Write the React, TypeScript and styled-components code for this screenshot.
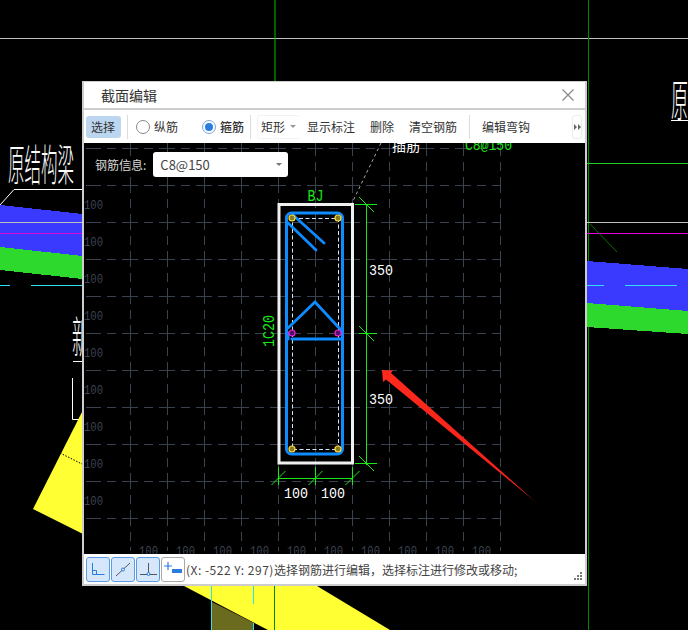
import { createGlobalStyle } from "styled-components";
import styled from "styled-components";

const GlobalStyle = createGlobalStyle`
  html, body { margin: 0; padding: 0; background: #000; }
  body { font-family: "Noto Sans CJK SC", "Noto Sans", sans-serif; }
`;

const Stage = styled.div`
  position: relative;
  width: 688px;
  height: 630px;
  overflow: hidden;
  background: #000;
`;

const Backdrop = styled.svg`
  display: block;
`;

const Dialog = styled.div`
  position: absolute;
  left: 82px;
  top: 81px;
  width: 505px;
  height: 505px;
  box-sizing: border-box;
  border: 2px solid #cdcdcd;
  border-top-width: 1px;
  background: #cdcdcd;
  display: flex;
  flex-direction: column;
`;

const TitleBar = styled.div`
  height: 26px;
  flex: none;
  background: #fff;
  display: flex;
  align-items: center;
  justify-content: space-between;
  padding: 0 11px 0 17px;
  margin-bottom: 2px;
  font-size: 14px;
  color: #333;
`;

const Toolbar = styled.div`
  height: 33px;
  flex: none;
  box-sizing: border-box;
  background: #fff;
  display: flex;
  align-items: center;
  padding-left: 2px;
  font-size: 12px;
  color: #333;
`;

const ToolButton = styled.span<{ $left?: number; $active?: boolean }>`
  margin-left: ${(p) => p.$left ?? 0}px;
  padding: 0 ${(p) => (p.$active ? 6 : 5)}px 0 5px;
  height: 22px;
  line-height: 22px;
  border-radius: 3px;
  background: ${(p) => (p.$active ? "#bcd6f0" : "transparent")};
  white-space: nowrap;
`;

const Separator = styled.span<{ $left: number }>`
  width: 1px;
  height: 24px;
  margin-left: ${(p) => p.$left}px;
  background: #dcdcdc;
`;

const Radio = styled.span<{ $left: number; $checked?: boolean }>`
  width: 14px;
  height: 14px;
  flex: none;
  box-sizing: border-box;
  margin-left: ${(p) => p.$left}px;
  margin-right: 4px;
  border-radius: 50%;
  border: 1px solid ${(p) => (p.$checked ? "#7aa7d8" : "#8a8a8a")};
  display: flex;
  align-items: center;
  justify-content: center;
  &::after {
    content: "";
    width: 8px;
    height: 8px;
    border-radius: 50%;
    background: ${(p) => (p.$checked ? "#2b7de0" : "transparent")};
  }
`;

const RadioLabel = styled.span<{ $strong?: boolean }>`
  font-weight: ${(p) => (p.$strong ? 500 : 400)};
  white-space: nowrap;
`;

const Caret = styled.span<{ $color: string }>`
  width: 0;
  height: 0;
  border-left: 3px solid transparent;
  border-right: 3px solid transparent;
  border-top: 3px solid ${(p) => p.$color};
`;

const ShapeMenu = styled.span`
  margin-left: 6px;
  height: 22px;
  padding: 0 4px 0 3px;
  display: flex;
  align-items: center;
  gap: 5px;
  border: 1px solid #f3f3f3;
  border-right: none;
  border-radius: 3px;
`;

const Overflow = styled.span`
  margin-left: auto;
  margin-right: 3px;
  width: 10px;
  height: 24px;
  box-sizing: border-box;
  border: 1px solid #ececec;
  border-radius: 3px;
  display: flex;
  align-items: center;
  justify-content: center;
`;

const Canvas = styled.div`
  position: relative;
  flex: 1;
  min-height: 0;
  background: #000;
  overflow: hidden;
`;

const CanvasDrawing = styled.svg`
  display: block;
`;

const InfoRow = styled.div`
  position: absolute;
  left: 11px;
  top: 9px;
  display: flex;
  align-items: center;
  gap: 7px;
  font-size: 12px;
  color: #d8d8d8;
`;

const SelectBox = styled.div`
  width: 135px;
  height: 25px;
  box-sizing: border-box;
  padding: 0 6px 0 7px;
  background: #fff;
  border-radius: 3px;
  display: flex;
  align-items: center;
  justify-content: space-between;
  font-size: 13px;
  color: #444;
`;

const StatusBar = styled.div`
  position: relative;
  height: 30px;
  flex: none;
  background: #fff;
  display: flex;
  align-items: center;
  padding-left: 2px;
  font-size: 12px;
  color: #444;
`;

const SnapGroup = styled.div`
  display: flex;
  gap: 1px;
  margin-right: 1px;
`;

const SnapButton = styled.span<{ $on?: boolean }>`
  width: 24px;
  height: 25px;
  box-sizing: border-box;
  border: 1px solid ${(p) => (p.$on ? "#5b9be6" : "#a8a8a8")};
  border-radius: 3px;
  background: ${(p) => (p.$on ? "#d6e6fb" : "#fff")};
  display: flex;
  align-items: center;
  justify-content: center;
`;

const StatusText = styled.span`
  white-space: nowrap;
`;

const Coords = styled.span`
  letter-spacing: 0.5px;
`;

const Grip = styled.svg`
  position: absolute;
  right: 2px;
  bottom: 3px;
`;

const gridXs = Array.from({ length: 11 }, (_, i) => 130 + i * 37);
const gridYs = Array.from({ length: 11 }, (_, i) => 148 + i * 37);
const leftLabelYs = [204, 241, 278, 315, 352, 389, 426, 463, 500];
const GREEN = "#18e818";
const BLUE = "#0d8bff";
const cadFont = '"Liberation Mono", monospace';

const DimSlash = ({ x, y }: { x: number; y: number }) => (
  <path d={`M${x - 7.5} ${y - 7.5}L${x + 7.5} ${y + 7.5}`} stroke={GREEN} fill="none" />
);

const BackdropArt = () => (
  <Backdrop width="688" height="630" viewBox="0 0 688 630">
    <defs>
      <clipPath id="edgeClip">
        <rect x="0" y="0" width="82" height="630" />
      </clipPath>
    </defs>
    <path d="M0 38.5H688" stroke="#c0c0c0" />
    <path d="M275 0V82" stroke="#00c000" />
    <path d="M588.5 0V630" stroke="#008a00" />

    <g shapeRendering="crispEdges">
      <polygon points="0,205 83,214 83,256 0,247" fill="#3a3aff" />
      <polygon points="0,247 83,256 83,279 0,270" fill="#2ed92e" />
      <polygon points="587,261 688,269 688,311 587,303" fill="#3a3aff" />
      <polygon points="587,303 688,311 688,334 587,327" fill="#2ed92e" />
    </g>
    <path d="M0 222.5H83M587 222.5H688" stroke="#c0c0c0" />
    <path d="M0 233.5H83M587 233.5H688" stroke="#e000e0" />
    <path d="M0 285.5H10M31 285.5H83M587 285.5H604M625 285.5H677" stroke="#30e0f0" />
    <path d="M587 163.5H688" stroke="#22cc22" />
    <path d="M590 224L617 252" stroke="#007000" />

    <path d="M0 205L14 189.5H83" stroke="#fff" fill="none" />
    <text x="8" y="69.6" fontSize="16.5" fill="#fff" transform="scale(1 2.6)" fontWeight="300">
      原结构梁
    </text>
    <text x="671" y="45" fontSize="17" fill="#fff" transform="scale(1 2.6)" fontWeight="300">
      原
    </text>
    <path d="M671 120.5H688" stroke="#fff" />
    <g clipPath="url(#edgeClip)">
      <text x="72" y="136" fontSize="17" fill="#fff" transform="scale(1 2.6)" fontWeight="300">
        新
      </text>
    </g>
    <path d="M73 361.5H83M72.5 378V419.5H83" stroke="#fff" fill="none" />

    <polygon points="83,410 33,509 83,534" fill="#ffff33" />
    <path d="M60 453L83 464.5" stroke="#000" strokeDasharray="1.5 1.5" />

    <polygon points="184,586 317,586 390,630 268,630" fill="#ffff33" />
    <polygon points="212,602 254,623 254,630 212,630" fill="#6b6b1f" />
    <path d="M211.5 586V630M253.5 586V604M253.5 623V630" stroke="#30e0f0" />
    <path d="M274.5 586V630" stroke="#008a00" />
  </Backdrop>
);

const SectionDrawing = () => (
  <CanvasDrawing width="501" height="411" viewBox="84 143 501 411">
    <defs>
      <linearGradient id="arrowFade" x1="382" y1="370" x2="537" y2="503" gradientUnits="userSpaceOnUse">
        <stop offset="0" stopColor="#ff2a1c" />
        <stop offset="0.9" stopColor="#f5201a" />
        <stop offset="1" stopColor="#6a0c08" />
      </linearGradient>
    </defs>

    {/* grid, centre-line dash with the long dash over each crossing */}
    <g stroke="#3a4250" strokeDasharray="16 6 9 6" fill="none">
      {gridYs.map((y) => (
        <path key={y} d={`M86 ${y + 0.5}H501`} strokeDashoffset="1" />
      ))}
      {gridXs.map((x) => (
        <path key={x} d={`M${x + 0.5} 143V551`} strokeDashoffset="3" />
      ))}
    </g>
    <g fill="#3c4352" fontFamily={cadFont} fontSize="13.5">
      {leftLabelYs.map((y) => (
        <text key={y} x="84" y={y + 5} textLength="19" lengthAdjust="spacingAndGlyphs">
          100
        </text>
      ))}
      {gridXs.slice(0, 10).map((x) => (
        <text key={x} x={x + 9} y="555" textLength="19" lengthAdjust="spacingAndGlyphs">
          100
        </text>
      ))}
    </g>

    {/* top annotation, cut off by the toolbar */}
    <path d="M381 143L352 203" stroke="#a8a8a8" strokeDasharray="3 3" fill="none" />
    <text x="392" y="151" fontSize="14" fill="#fff">
      插筋
    </text>
    <text x="465" y="150" fontFamily={cadFont} fontSize="15" fill={GREEN} textLength="47" lengthAdjust="spacingAndGlyphs">
      C8@150
    </text>

    {/* section outline */}
    <rect x="279" y="204.5" width="73.5" height="258.5" fill="none" stroke="#f0f0f0" strokeWidth="3" />

    {/* stirrup */}
    <rect x="286.5" y="213" width="56" height="241" rx="5" fill="none" stroke={BLUE} strokeWidth="3" />
    <rect x="292.5" y="218.5" width="46" height="231" fill="none" stroke="#cfe6ff" strokeDasharray="4 2.5" />

    {/* hooks */}
    <g stroke={BLUE} strokeWidth="2.8" fill="none" strokeLinecap="round">
      <path d="M293 215L324 243" />
      <path d="M287 222L316 250" />
      <path d="M288 328L315 302L341 330" />
      <path d="M292 339H342" strokeWidth="3" />
      <path d="M288 333V339" strokeWidth="3" />
    </g>

    {/* rebar points */}
    {[
      [292, 218],
      [338, 218],
      [292, 449],
      [338, 449],
    ].map(([x, y]) => (
      <circle key={`${x}-${y}`} cx={x} cy={y} r="3" fill="#8a7a20" stroke="#ffd83c" strokeWidth="1.2" />
    ))}
    {[292, 338].map((x) => (
      <circle key={x} cx={x} cy="333" r="3" fill="#50106a" stroke="#f020d0" strokeWidth="1.2" />
    ))}

    {/* dimensions */}
    <path d="M366.5 204V465" stroke={GREEN} fill="none" />
    <path d="M355 204.5H377M359 333.5H377M355 463.5H377" stroke={GREEN} fill="none" />
    <DimSlash x={366.5} y={204.5} />
    <DimSlash x={366.5} y={333.5} />
    <DimSlash x={366.5} y={463.5} />
    <path d="M278 478.5H352" stroke={GREEN} fill="none" />
    {[278.5, 315.5, 352.5].map((x) => (
      <g key={x} stroke={GREEN} fill="none">
        <path d={`M${x} 467V485`} />
        <path d={`M${x - 7} 485L${x + 7} 471`} />
      </g>
    ))}

    <g fill="#fff" fontFamily={cadFont} fontSize="15">
      <text x="369" y="275" textLength="24" lengthAdjust="spacingAndGlyphs">350</text>
      <text x="369" y="404" textLength="24" lengthAdjust="spacingAndGlyphs">350</text>
      <text x="284" y="498" textLength="24" lengthAdjust="spacingAndGlyphs">100</text>
      <text x="321" y="498" textLength="24" lengthAdjust="spacingAndGlyphs">100</text>
    </g>
    <g fill={GREEN} fontFamily={cadFont} fontSize="17">
      <text x="307.5" y="201" textLength="16" lengthAdjust="spacingAndGlyphs">BJ</text>
      <text x="274" y="347" fontSize="16" textLength="32" lengthAdjust="spacingAndGlyphs" transform="rotate(-90 274 347)">1C20</text>
    </g>

    {/* red pointer arrow */}
    <polygon
      points="382,370 393,370.5 391,373 537.5,503.5 386,379.5 383,382"
      fill="url(#arrowFade)"
    />
  </CanvasDrawing>
);

const CloseIcon = () => (
  <svg width="12" height="12" viewBox="0 0 12 12">
    <path d="M0.5 0.5L11.5 11.5M11.5 0.5L0.5 11.5" stroke="#888" strokeWidth="1.2" />
  </svg>
);

const MoreIcon = () => (
  <svg width="7" height="6" viewBox="0 0 7 6" fill="#666">
    <path d="M0 0L3 3L0 6Z" />
    <path d="M4 0L7 3L4 6Z" />
  </svg>
);

const CornerIcon = () => (
  <svg width="14" height="14" viewBox="0 0 14 14" fill="none" stroke="#2b7de0">
    <path d="M1.5 1V12.5H13.5" />
    <path d="M1.5 8.5H5.5V12.5" />
  </svg>
);

const MidIcon = () => (
  <svg width="16" height="15" viewBox="0 0 16 15" fill="none">
    <path d="M1 14L15 1" stroke="#555" />
    <circle cx="8" cy="7.5" r="1.5" fill="#d6e6fb" stroke="#2b7de0" />
  </svg>
);

const PerpIcon = () => (
  <svg width="17" height="14" viewBox="0 0 17 14" fill="none">
    <path d="M8.5 1V11.5M0 12.5H17" stroke="#555" />
    <circle cx="8.5" cy="12" r="1.5" fill="#d6e6fb" stroke="#2b7de0" />
  </svg>
);

const AddBarIcon = () => (
  <svg width="20" height="16" viewBox="0 0 20 16" fill="none">
    <path d="M5 1V9M1 5H9" stroke="#2b7de0" strokeWidth="1.2" />
    <rect x="9" y="8" width="10" height="4" fill="#2b7de0" />
  </svg>
);

export default function App() {
  return (
    <>
      <GlobalStyle />
      <Stage>
        <BackdropArt />
        <Dialog>
          <TitleBar>
            <span>截面编辑</span>
            <CloseIcon />
          </TitleBar>
          <Toolbar>
            <ToolButton $active>选择</ToolButton>
            <Separator $left={6} />
            <Radio $left={8} />
            <RadioLabel>纵筋</RadioLabel>
            <Radio $left={24} $checked />
            <RadioLabel $strong>箍筋</RadioLabel>
            <Separator $left={6} />
            <ShapeMenu>
              矩形
              <Caret $color="#999" />
            </ShapeMenu>
            <ToolButton $left={2}>显示标注</ToolButton>
            <ToolButton $left={5}>删除</ToolButton>
            <ToolButton $left={5}>清空钢筋</ToolButton>
            <Separator $left={7} />
            <ToolButton $left={7}>编辑弯钩</ToolButton>
            <Overflow>
              <MoreIcon />
            </Overflow>
          </Toolbar>
          <Canvas>
            <SectionDrawing />
            <InfoRow>
              <span>钢筋信息:</span>
              <SelectBox>
                C8@150
                <Caret $color="#777" />
              </SelectBox>
            </InfoRow>
          </Canvas>
          <StatusBar>
            <SnapGroup>
              <SnapButton $on>
                <CornerIcon />
              </SnapButton>
              <SnapButton $on>
                <MidIcon />
              </SnapButton>
              <SnapButton $on>
                <PerpIcon />
              </SnapButton>
              <SnapButton>
                <AddBarIcon />
              </SnapButton>
            </SnapGroup>
            <StatusText>
              <Coords>(X: -522 Y: 297)</Coords>选择钢筋进行编辑，选择标注进行修改或移动;
            </StatusText>
            <Grip width="10" height="10" viewBox="0 0 10 10" fill="#777">
              <rect x="7" y="1" width="2" height="2" />
              <rect x="4" y="4" width="2" height="2" />
              <rect x="7" y="4" width="2" height="2" />
              <rect x="1" y="7" width="2" height="2" />
              <rect x="4" y="7" width="2" height="2" />
              <rect x="7" y="7" width="2" height="2" />
            </Grip>
          </StatusBar>
        </Dialog>
      </Stage>
    </>
  );
}
